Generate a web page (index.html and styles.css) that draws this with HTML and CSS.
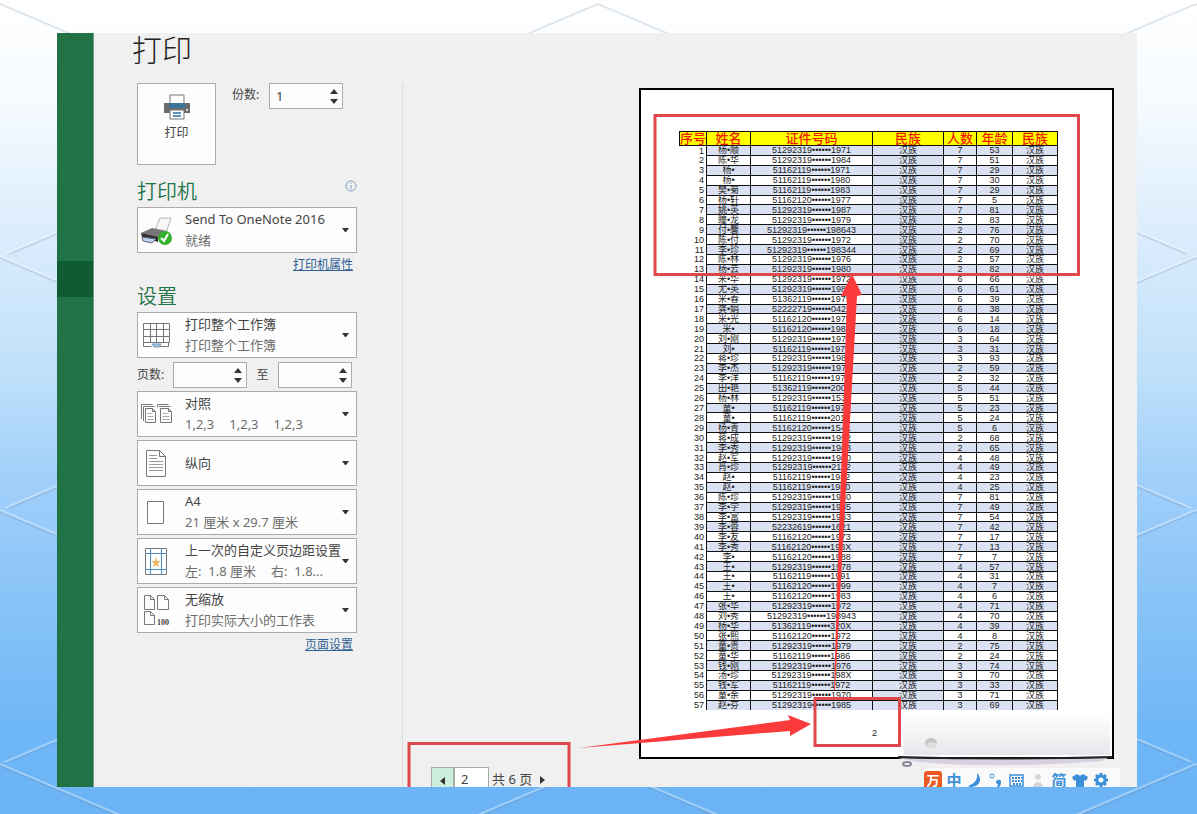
FILE: index.html
```html
<!DOCTYPE html>
<html lang="zh-CN">
<head>
    <meta charset="UTF-8">
    <meta name="viewport" content="width=device-width, initial-scale=1.0">
    <title>打印</title>
    <link rel="stylesheet" href="styles.css">
</head>
<body>
    <svg class="backdrop" aria-hidden="true">
        <defs>
            <pattern id="diamonds" width="598" height="254" patternUnits="userSpaceOnUse">
                <g fill="none" stroke="#5f7f9f" stroke-opacity="0.2" stroke-width="2">
                    <path d="M0 4L299 131L598 4M0 258L299 131L598 258"/>
                </g>
                <g fill="none" stroke="#ffffff" stroke-opacity="0.35" stroke-width="2">
                    <path d="M0 2L299 129L598 2M0 256L299 129L598 256"/>
                </g>
            </pattern>
        </defs>
        <rect width="100%" height="100%" fill="url(#diamonds)"/>
    </svg>

    <div class="window">
        <nav class="rail">
            <div class="rail-active"></div>
        </nav>

        <section class="settings">
            <h1>打印</h1>

            <div class="print-row">
                <button class="print-button">
                    <svg width="28" height="26" viewBox="0 0 28 26">
                        <path d="M1 9h26v10H1z" fill="#6b6b6b"/>
                        <path d="M7 1h14v12H7z" fill="#fff" stroke="#777"/>
                        <path d="M6 9h16v5H6z" fill="#3f7399"/>
                        <path d="M7 16h14v9H7z" fill="#fff" stroke="#777"/>
                        <path d="M10 19h8M10 22h8" stroke="#5b93bd" stroke-width="2"/>
                        <circle cx="24" cy="16" r="1" fill="#fff"/>
                    </svg>
                    打印
                </button>
                <label for="copies">份数:</label>
                <div class="spinner">
                    <input type="number" id="copies" value="1" min="1">
                    <span class="spin-buttons">
                        <button aria-label="增加份数"><svg width="8" height="5"><path d="M0 5L4 0L8 5z"/></svg></button>
                        <button aria-label="减少份数"><svg width="8" height="5"><path d="M0 0L4 5L8 0z"/></svg></button>
                    </span>
                </div>
            </div>

            <div class="section-title">
                <h2>打印机</h2>
                <svg width="12" height="12" viewBox="0 0 12 12" fill="none" stroke="#7f9fc0">
                    <circle cx="6" cy="6" r="5"/>
                    <path d="M6 5v4M6 3v1"/>
                </svg>
            </div>
            <button class="option" aria-haspopup="listbox">
                <svg class="option-icon" width="36" height="34" viewBox="0 0 36 34">
                    <path d="M17 17L22 5L33 5L28 20z" fill="#f7f7f7" stroke="#b5b5b5"/>
                    <path d="M3 20L14 15L29 18L20 25z" fill="#777"/>
                    <path d="M3 20L20 24V29L4 24z" fill="#2f2f2f"/>
                    <path d="M4 24L18 26L14 30L5 28z" fill="#b7d3ea" stroke="#667"/>
                    <circle cx="27" cy="25" r="7" fill="#35b02e"/>
                    <path d="M23 25L26 28L30 21" fill="none" stroke="#fff" stroke-width="2"/>
                </svg>
                <span class="option-text"><span>Send To OneNote 2016</span><small>就绪</small></span>
                <svg class="caret" width="7" height="4"><path d="M0 0h7L4 4H3z"/></svg>
            </button>
            <a class="more" href="#">打印机属性</a>

            <div class="section-title">
                <h2>设置</h2>
            </div>
            <div class="options">
                <button class="option" aria-haspopup="listbox">
                    <svg class="option-icon" width="36" height="34" viewBox="0 0 36 34" fill="none" stroke="#777">
                        <path d="M5.500 5.500h26v19h-26zM12.500 5v20M18.500 5v20M25.500 5v20M5 11.500h27M5 18.500h27"/>
                        <path d="M5.500 25v3.500h8M22 28.500h8.500V25"/>
                        <path d="M14 26h9l-2 3h-5z" fill="#a9c6df" stroke="#7197b8"/>
                    </svg>
                    <span class="option-text"><span>打印整个工作簿</span><small>打印整个工作簿</small></span>
                    <svg class="caret" width="7" height="4"><path d="M0 0h7L4 4H3z"/></svg>
                </button>

                <div class="pages-row">
                    <label for="page-from">页数:</label>
                    <div class="spinner">
                        <input type="number" id="page-from" min="1">
                        <span class="spin-buttons">
                            <button aria-label="增加起始页"><svg width="8" height="5"><path d="M0 5L4 0L8 5z"/></svg></button>
                            <button aria-label="减少起始页"><svg width="8" height="5"><path d="M0 0L4 5L8 0z"/></svg></button>
                        </span>
                    </div>
                    <label for="page-to">至</label>
                    <div class="spinner">
                        <input type="number" id="page-to" min="1">
                        <span class="spin-buttons">
                            <button aria-label="增加结束页"><svg width="8" height="5"><path d="M0 5L4 0L8 5z"/></svg></button>
                            <button aria-label="减少结束页"><svg width="8" height="5"><path d="M0 0L4 5L8 0z"/></svg></button>
                        </span>
                    </div>
                </div>

                <button class="option" aria-haspopup="listbox">
                    <svg class="option-icon" width="36" height="34" viewBox="0 0 36 34" fill="none" stroke="#777">
                        <path d="M3.500 22V7.500h11M5.500 24V9.500h11M19.500 10V7.500h11M21 9.500h11.500"/>
                        <path d="M7.500 11.500h7l3 3v11h-10zM14.500 11.500v3h3M22.500 11.500h8l3 3v11h-11zM30.500 11.500v3h3"/>
                        <path d="M9.500 16.500h4M9.500 19.500h6M9.500 22.500h6M24.500 16.500h5M24.500 19.500h7M24.500 22.500h7" stroke="#aaa"/>
                    </svg>
                    <span class="option-text"><span>对照</span><small class="collate"><span>1,2,3</span><span>1,2,3</span><span>1,2,3</span></small></span>
                    <svg class="caret" width="7" height="4"><path d="M0 0h7L4 4H3z"/></svg>
                </button>

                <button class="option" aria-haspopup="listbox">
                    <svg class="option-icon" width="36" height="34" viewBox="0 0 36 34" fill="none" stroke="#777">
                        <path d="M8.500 4.500h13l6 6v20h-19zM21.500 4.500v6h6"/>
                        <path d="M11 9.500h8M11 12.500h8M11 15.500h14M11 18.500h14M11 21.500h14M11 24.500h14" stroke="#999"/>
                    </svg>
                    <span class="option-text"><span>纵向</span></span>
                    <svg class="caret" width="7" height="4"><path d="M0 0h7L4 4H3z"/></svg>
                </button>

                <button class="option" aria-haspopup="listbox">
                    <svg class="option-icon" width="36" height="34" viewBox="0 0 36 34">
                        <path d="M9.500 6.500h16v22h-16z" fill="#fff" stroke="#777"/>
                    </svg>
                    <span class="option-text"><span>A4</span><small>21 厘米 x 29.7 厘米</small></span>
                    <svg class="caret" width="7" height="4"><path d="M0 0h7L4 4H3z"/></svg>
                </button>

                <button class="option" aria-haspopup="listbox">
                    <svg class="option-icon" width="36" height="34" viewBox="0 0 36 34" fill="none">
                        <path d="M7.500 4.500h21v26h-21z" stroke="#777"/>
                        <path d="M12.500 4v27M23.500 4v27M7 9.500h22M7 25.500h22" stroke="#4f8fc4"/>
                        <path d="M18 13l1 4h4l-3 2l1 4l-3-2l-3 2l1-4l-3-2h4z" fill="#edb35e"/>
                    </svg>
                    <span class="option-text"><span>上一次的自定义页边距设置</span><small class="margins"><span>左:&nbsp; 1.8 厘米</span><span>右:&nbsp; 1.8...</span></small></span>
                    <svg class="caret" width="7" height="4"><path d="M0 0h7L4 4H3z"/></svg>
                </button>

                <button class="option" aria-haspopup="listbox">
                    <svg class="option-icon" width="36" height="34" viewBox="0 0 36 34" fill="none" stroke="#777">
                        <path d="M6.500 2.500h6l4 4v10h-10zM12.500 2.500v4h4M19.500 2.500h7l4 4v10h-11zM26.500 2.500v4h4M6.500 18.500h6l4 4v9h-10zM12.500 18.500v4h4"/>
                        <text class="icon-text" x="19" y="32">100</text>
                    </svg>
                    <span class="option-text"><span>无缩放</span><small>打印实际大小的工作表</small></span>
                    <svg class="caret" width="7" height="4"><path d="M0 0h7L4 4H3z"/></svg>
                </button>
            </div>
            <a class="more" href="#">页面设置</a>
        </section>

        <main class="preview">
            <div class="sheet">
                <table>
                    <colgroup>
                        <col class="col-no"><col class="col-name"><col class="col-id"><col class="col-group"><col class="col-count"><col class="col-age"><col class="col-last">
                    </colgroup>
                    <thead>
                        <tr><th>序号</th><th>姓名</th><th>证件号码</th><th>民族</th><th>人数</th><th>年龄</th><th>民族</th></tr>
                    </thead>
                    <tbody id="rows"></tbody>
                </table>
                <div class="page-number">2</div>
            </div>

            <div class="bottom-bar">
                <div class="pager">
                    <button class="prev" aria-label="上一页"><svg width="5" height="8"><path d="M5 0v8L0 4z"/></svg></button>
                    <input type="text" value="2" aria-label="当前页">
                    <span>共 6 页</span>
                    <button class="next" aria-label="下一页"><svg width="5" height="8"><path d="M0 0v8L5 4z"/></svg></button>
                </div>
                <div class="ime">
                    <span class="ime-logo">万</span>
                    <span>中</span>
                    <svg width="18" height="18" viewBox="0 0 18 18"><path d="M11 2C17 8 14 16 4 16C2 16 2 15 4 14C9 12 12 8 11 2z"/></svg>
                    <svg width="18" height="18" viewBox="0 0 18 18"><circle cx="5" cy="5" r="2" fill="none" stroke="#3c8fd9"/><path d="M11 9a2 2 0 0 1 3 2c0 3-1 5-4 6l1-4a2 2 0 0 1 0-4z"/></svg>
                    <svg width="18" height="18" viewBox="0 0 18 18"><path d="M2 4h13v11H2z" fill="none" stroke="#3c8fd9" stroke-width="1.500"/><path d="M4 7h10M4 10h10M5 13h8" stroke="#3c8fd9" stroke-dasharray="2 1" stroke-width="2"/></svg>
                    <svg class="muted" width="18" height="18" viewBox="0 0 18 18"><circle cx="9" cy="6" r="3"/><path d="M4 17c0-8 10-8 10 0z"/></svg>
                    <span>简</span>
                    <svg width="18" height="18" viewBox="0 0 18 18"><path d="M6 3q3 3 6 0l5 3-2 4-2-1v7H5V9L3 10 1 6z"/></svg>
                    <svg width="18" height="18" viewBox="0 0 18 18" fill="none"><circle cx="9" cy="9" r="4" fill="none" stroke="#3c8fd9" stroke-width="3"/><path d="M9 2v3M9 13v3M2 9h3M13 9h3M4 4l2 2M12 12l2 2M14 4l-2 2M6 12l-2 2" stroke="#3c8fd9" stroke-width="3"/></svg>
                </div>
            </div>
        </main>

        <!-- red callouts drawn over the preview -->
        <svg class="marks" viewBox="57 33 1080 754" aria-hidden="true">
            <defs>
                <linearGradient id="fade" x1="0" y1="0" x2="0" y2="1">
                    <stop offset="0" stop-color="#e4e4ea" stop-opacity="0"/>
                    <stop offset="1" stop-color="#dadae2" stop-opacity="0.7"/>
                </linearGradient>
            </defs>
            <path d="M901 712H1110V755H904z" fill="url(#fade)"/>
            <path d="M898 758Q1010 761 1108 758L1102 761Q1000 769 918 762z" fill="#d8d0e0"/>
            <path d="M898 757Q1010 760 1112 757" fill="none" stroke="#222" stroke-width="2"/>
            <ellipse cx="931" cy="743" rx="6" ry="5" fill="#c6c6c6"/>
            <ellipse cx="932" cy="745" rx="5" ry="3" fill="#dedede"/>
            <ellipse cx="907" cy="764" rx="4" ry="2" fill="none" stroke="#8a8499" stroke-width="2"/>
            <g fill="none" stroke="#dd484b" stroke-width="3">
                <path d="M655 115.500H1078.500V274.500H655z"/>
                <path d="M815 698.500H899.500V745.500H815z"/>
                <path d="M409 790V743.500H569V790"/>
            </g>
            <path d="M579 748L790 720L788 715L811 724L790 736V731z" fill="#fb3b3b"/>
            <path d="M852 274L862 295L857 296L850 420L842 560L835 690H834L838 560L843 420L847 296L841 296z" fill="#fb3b3b"/>
        </svg>
    </div>
    <script src="script.js"></script>
</body>
</html>
```
FILE: styles.css
```css
* {
    box-sizing: border-box;
}
body {
    margin: 0;
    min-height: 100vh;
    display: flex;
    padding: 33px 60px 27px 57px;
    font-family: "Noto Sans", "Noto Sans CJK SC", sans-serif;
    font-size: 13px;
    color: #444;
    background: linear-gradient(#ffffff 0%, #f6fbff 12%, #d9ebfc 30%, #c0e1fa 45%, #a1cffa 59%, #88c3f7 74%, #70b7f7 89%, #6bb3f4 100%);
}
button, input {
    font: inherit;
    color: inherit;
    margin: 0;
    padding: 0;
    border: none;
    background: none;
}
button {
    cursor: pointer;
}
.backdrop {
    position: absolute;
    inset: 0;
    width: 100%;
    height: 100%;
}
.window {
    position: relative;
    flex: 1;
    display: flex;
    height: calc(100vh - 60px);
    overflow: hidden;
    background: #f0f0f0;
}
.rail {
    flex: none;
    width: 37px;
    padding-top: 228px;
    background: #217346;
    border-right: 1px solid #6f9c80;
}
.rail-active {
    height: 36px;
    background: #0e5c2f;
}

/* left column */
.settings {
    flex: none;
    width: 308px;
    padding: 0 45px 0 43px;
}
h1 {
    margin: 0 0 16px -5px;
    font-size: 30px;
    font-weight: 300;
    line-height: 34px;
    color: #222;
}
.print-row {
    display: flex;
    align-items: flex-start;
    margin-bottom: 7px;
}
.print-row label {
    width: 53px;
    padding-left: 16px;
    line-height: 24px;
    font-size: 12px;
    white-space: nowrap;
}
.print-button {
    width: 79px;
    height: 82px;
    padding-bottom: 12px;
    display: flex;
    flex-direction: column;
    align-items: center;
    justify-content: center;
    gap: 4px;
    font-size: 12px;
    line-height: 18px;
    background: #fdfdfd;
    border: 1px solid #ababab;
}
.spinner {
    display: flex;
    width: 74px;
    height: 26px;
    background: #fdfdfd;
    border: 1px solid #ababab;
}
.spinner input {
    flex: 1;
    min-width: 0;
    padding-left: 6px;
    appearance: textfield;
}
.spinner input::-webkit-inner-spin-button {
    appearance: none;
}
.spin-buttons {
    width: 12px;
    display: flex;
    flex-direction: column;
    justify-content: center;
    gap: 5px;
}
.spin-buttons button {
    display: flex;
    fill: #333;
}
.section-title {
    display: flex;
    justify-content: space-between;
    align-items: flex-start;
    padding-top: 8px;
    height: 35px;
}
h2 {
    margin: 0;
    font-size: 20px;
    font-weight: 350;
    line-height: 24px;
    color: #217346;
}
.options {
    display: flex;
    flex-direction: column;
    gap: 3px;
}
.option {
    display: flex;
    align-items: center;
    width: 220px;
    height: 46px;
    padding-right: 7px;
    text-align: left;
    background: #fdfdfd;
    border: 1px solid #ababab;
}
.option-icon {
    flex: none;
    margin-right: 11px;
}
.option-text {
    flex: 1;
    display: flex;
    flex-direction: column;
    min-width: 0;
    white-space: nowrap;
    line-height: 21px;
}
.option-text small {
    font-size: 13px;
    color: #6e6e6e;
}
.collate, .margins {
    display: flex;
    gap: 15px;
}
.caret {
    flex: none;
    fill: #333;
}
.icon-text {
    font: bold 8px "Liberation Serif", serif;
    fill: #444;
    stroke: none;
}
.more {
    display: block;
    padding-right: 4px;
    text-align: right;
    font-size: 12px;
    line-height: 24px;
    color: #2f6096;
}
.pages-row {
    display: flex;
    align-items: center;
    margin-top: 1px;
    font-size: 12px;
}
.pages-row label {
    width: 36px;
    line-height: 24px;
}
.pages-row .spinner + label {
    width: 31px;
    text-align: center;
}

/* preview area */
.preview {
    flex: 1;
    display: flex;
    flex-direction: column;
    align-items: flex-end;
    margin-top: 50px;
    padding-top: 5px;
    border-left: 1px solid #dcdcdc;
}
.sheet {
    flex: none;
    width: 475px;
    margin-right: 23px;
    padding: 41px 0 19px 38px;
    background: #fff;
    border: 2px solid #000;
}
table {
    width: 378px;
    height: 579px;
    table-layout: fixed;
    border-collapse: collapse;
    font-family: "Liberation Sans", "Noto Sans CJK SC", sans-serif;
    font-size: 9px;
    line-height: 8px;
    text-align: center;
    color: #222;
}
.col-no { width: 27px; }
.col-name { width: 44px; }
.col-id { width: 122px; }
.col-group { width: 71px; }
.col-count { width: 33px; }
.col-age { width: 36px; }
.col-last { width: 45px; }
th, td {
    padding: 0;
    border: 1px solid #111;
    white-space: nowrap;
}
th {
    height: 14px;
    font-size: 13px;
    font-weight: 500;
    line-height: 13px;
    color: #f01c00;
    background: #ffff00;
}
td:first-child {
    text-align: right;
    padding-right: 2px;
    border-width: 0 1px 0 0;
}
tbody tr:nth-child(odd) td:not(:first-child), td:nth-child(4) {
    background: #d9e1f2;
}
tbody tr:last-child td {
    border-bottom: none;
}
.page-number {
    padding: 18px 0 0 193px;
    font: 9px/10px "Liberation Sans", sans-serif;
    color: #222;
}
.bottom-bar {
    align-self: stretch;
    display: flex;
    justify-content: space-between;
    margin-top: 8px;
    padding: 0 17px 0 28px;
}
.pager {
    display: flex;
    height: 24px;
    line-height: 24px;
}
.pager svg {
    fill: #333;
}
.prev {
    width: 23px;
    background: #cdeedd;
    border: 1px solid #ababab;
}
.pager input {
    width: 35px;
    padding-left: 6px;
    background: #fff;
    border: 1px solid #ababab;
}
.pager span {
    padding-left: 3px;
}
.next {
    width: 20px;
}
.ime {
    display: flex;
    gap: 3px;
    height: 26px;
    margin-top: 1px;
    padding: 3px 10px 0 0;
    font-size: 15px;
    font-weight: 700;
    line-height: 18px;
    color: #3c8fd9;
    fill: #3c8fd9;
    background: #fafafa;
    border-radius: 3px;
}
.ime span {
    width: 18px;
    height: 18px;
    text-align: center;
}
.ime .ime-logo {
    font-size: 13px;
    color: #fff;
    background: #ec5a24;
    border-radius: 3px;
}
.ime .muted {
    fill: #d3d7dc;
}
.marks {
    position: absolute;
    inset: 0;
    width: 100%;
    height: 100%;
    pointer-events: none;
}
```
FILE: script.js
```js
// name, id start, id end, people, age
const people = [
    ['杨•顺', '51292319', '1971', 7, 53],
    ['陈•华', '51292319', '1984', 7, 51],
    ['杨•', '51162119', '1971', 7, 29],
    ['杨•', '51162119', '1980', 7, 30],
    ['樊•菊', '51162119', '1983', 7, 29],
    ['杨•轩', '51162120', '1977', 7, 5],
    ['姚•英', '51292319', '1987', 7, 81],
    ['瞳•龙', '51292319', '1979', 2, 83],
    ['付•馨', '51292319', '198643', 2, 76],
    ['陈•付', '51292319', '1972', 2, 70],
    ['李•珍', '51292319', '198344', 2, 69],
    ['陈•林', '51292319', '1976', 2, 57],
    ['杨•云', '51292319', '1980', 2, 82],
    ['米•华', '51292319', '1972', 6, 66],
    ['尤•英', '51292319', '1987', 6, 61],
    ['米•春', '51362119', '1975', 6, 39],
    ['龚•娟', '52222719', '0421', 6, 38],
    ['米•光', '51162120', '1975', 6, 14],
    ['米•', '51162120', '1983', 6, 18],
    ['刘•刚', '51292319', '1972', 3, 64],
    ['刘•', '51162119', '1976', 3, 31],
    ['蒋•珍', '51292319', '1983', 3, 93],
    ['李•杰', '51292319', '1973', 2, 59],
    ['李•洋', '51162119', '1976', 2, 32],
    ['田•艳', '51362119', '2003', 5, 44],
    ['杨•林', '51292319', '1532', 5, 51],
    ['童•', '51162119', '1975', 5, 23],
    ['童•', '51162119', '2012', 5, 24],
    ['杨•青', '51162120', '1541', 5, 6],
    ['蒋•成', '51292319', '1992', 2, 68],
    ['李•秀', '51292319', '1983', 2, 65],
    ['赵•军', '51292319', '1980', 4, 48],
    ['肖•珍', '51292319', '2112', 4, 49],
    ['赵•', '51162119', '1982', 4, 23],
    ['赵•', '51162119', '1980', 4, 25],
    ['陈•珍', '51292319', '1980', 7, 81],
    ['李•学', '51292319', '1985', 7, 49],
    ['李•富', '51292319', '1983', 7, 54],
    ['李•蓉', '52232619', '1621', 7, 42],
    ['李•友', '51162120', '1973', 7, 17],
    ['李•秀', '51162120', '198X', 7, 13],
    ['李•', '51162120', '1988', 7, 7],
    ['王•', '51292319', '1978', 4, 57],
    ['王•', '51162119', '1991', 4, 31],
    ['王•', '51162120', '1999', 4, 7],
    ['王•', '51162120', '1983', 4, 6],
    ['张•华', '51292319', '1972', 4, 71],
    ['刘•秀', '51292319', '198943', 4, 70],
    ['杨•华', '51362119', '320X', 4, 39],
    ['张•熙', '51162120', '1972', 4, 8],
    ['童•贵', '51292319', '1979', 2, 75],
    ['童•华', '51162119', '1986', 2, 24],
    ['钱•刚', '51292319', '1976', 3, 74],
    ['汤•珍', '51292319', '198X', 3, 70],
    ['钱•军', '51162119', '1972', 3, 33],
    ['童•余', '51292319', '1970', 3, 71],
    ['赵•芬', '51292319', '1985', 3, 69]
];

document.getElementById('rows').innerHTML = people.map(([name, start, end, count, age], i) =>
    `<tr><td>${i + 1}</td><td>${name}</td><td>${start}••••••${end}</td><td>汉族</td><td>${count}</td><td>${age}</td><td>汉族</td></tr>`
).join('');
```
